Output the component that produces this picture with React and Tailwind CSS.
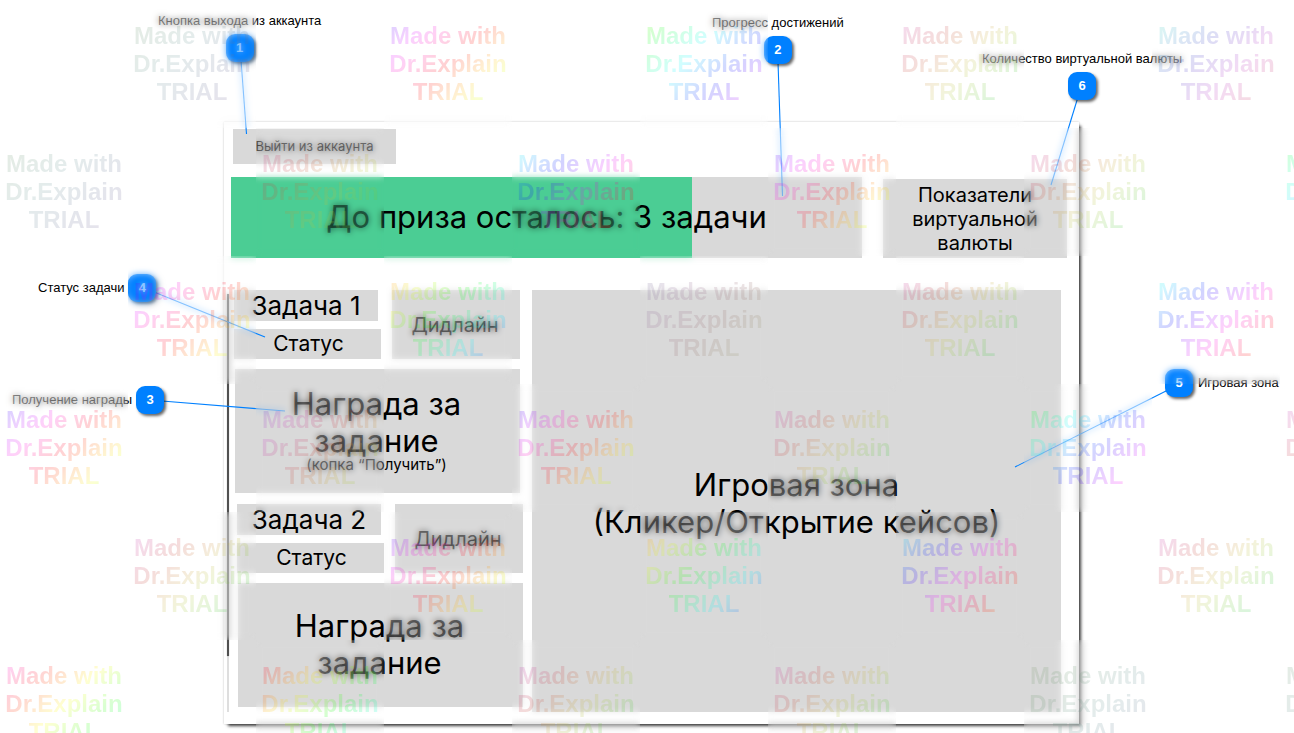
import React from "react";

const FULL = 100;
const SOFT = 55;
const FAINT = 18;

const WATERMARKS = [
  [1, 0, 100, 200, FAINT], [3, 0, 225, 270, FULL], [5, 0, 70, 270, FULL], [7, 0, 285, 250, SOFT], [9, 0, 140, 260, SOFT],
  [0, 1, 100, 200, FAINT], [2, 1, 300, 210, SOFT], [4, 1, 145, 290, FULL], [6, 1, 225, 265, FULL], [8, 1, 285, 250, SOFT], [10, 1, 100, 260, FULL],
  [1, 2, 230, 255, FULL], [3, 2, 0, 270, FULL], [5, 2, 225, 250, FAINT], [7, 2, 285, 260, SOFT], [9, 2, 140, 290, FULL],
  [0, 3, 215, 280, FULL], [2, 3, 235, 260, SOFT], [4, 3, 220, 280, FULL], [6, 3, 270, 280, SOFT], [8, 3, 90, 275, FULL], [10, 3, 275, 250, SOFT],
  [1, 4, 275, 265, SOFT], [3, 4, 225, 275, FULL], [5, 4, 0, 275, FULL], [7, 4, 155, 285, FULL], [9, 4, 275, 275, SOFT],
  [0, 5, 275, 290, FULL], [2, 5, 310, 290, FULL], [4, 5, 270, 275, SOFT], [6, 5, 275, 270, SOFT], [8, 5, 70, 190, FAINT], [10, 5, 105, 190, FAINT],
];

function spectrum(hue, span, saturation) {
  const stops = Array.from({ length: 13 }, (_, i) => `hsl(${hue + (span * i) / 12} ${saturation}% 50%)`);
  return `linear-gradient(135deg, ${stops.join(", ")})`;
}

function WatermarkLayer() {
  return (
    <div className="pointer-events-none absolute inset-0 grid auto-rows-[128px] grid-cols-[repeat(11,128px)] overflow-hidden">
      {WATERMARKS.map(([column, row, hue, span, saturation]) => (
        <div
          key={`${column}-${row}`}
          className="relative"
          style={{ gridColumn: column + 1, gridRow: row + 1 }}
        >
          <div className="absolute inset-0 opacity-60 backdrop-blur-[3px]" />
          <p
            className="relative h-full bg-clip-text pt-[22px] text-center font-['Liberation_Sans',Arial,sans-serif] text-2xl leading-7 font-bold text-transparent opacity-[0.18]"
            style={{ backgroundImage: spectrum(hue, span, saturation) }}
          >
            Made with
            <br />
            Dr.Explain
            <br />
            TRIAL
          </p>
        </div>
      ))}
    </div>
  );
}

function Badge({ children }) {
  return (
    <span className="flex size-7 shrink-0 items-center justify-center rounded-[9px] bg-[#0080ff] text-[13px] font-bold text-white shadow-[2px_2px_3px_rgba(0,0,0,0.6)]">
      {children}
    </span>
  );
}

function Callout({ number, label, className }) {
  return (
    <div
      className={`absolute flex items-center font-['Liberation_Sans',Arial,sans-serif] text-[13px] leading-4 whitespace-nowrap text-black ${className}`}
    >
      <span>{label}</span>
      <Badge>{number}</Badge>
    </div>
  );
}

function Leaders() {
  return (
    <svg className="pointer-events-none absolute inset-0 h-full w-full" stroke="#0080ff" strokeWidth="1.1" aria-hidden="true">
      <path d="M241 60 246.500 134" />
      <path d="M778 62 782.500 196" />
      <path d="M1078 97 1051 185" />
      <path d="M154 292 265 337" />
      <path d="M162 401 285 411" />
      <path d="M1168 390 1015 467" />
    </svg>
  );
}

function Task({ title, note, className }) {
  return (
    <article className={`w-[286px] ${className}`}>
      <div className="flex justify-between">
        <div className="flex flex-col gap-2">
          <h2 className="flex h-[31px] w-36 items-center justify-center bg-[#d9d9d9] text-[26px]">{title}</h2>
          <p className="flex h-[30px] w-[147px] items-center justify-center bg-[#d9d9d9] pl-[2px] text-[21px]">Статус</p>
        </div>
        <p className="flex w-32 items-center justify-center bg-[#d9d9d9] pr-[2px] text-xl">Дидлайн</p>
      </div>
      <button
        type="button"
        className={`mt-[10px] ml-px flex h-[124px] w-[285px] flex-col items-center justify-center bg-[#d9d9d9] pr-[2px] ${note ? "pb-1.5" : "pb-[3px]"}`}
      >
        <span className="text-[31px] leading-[37px]">
          Награда за
          <br />
          задание
        </span>
        {note && <span className="text-[15px] leading-3">{note}</span>}
      </button>
    </article>
  );
}

export default function App() {
  const progress = 73;
  return (
    <div className="relative overflow-hidden bg-white pt-[122px] pr-[215px] pb-[9px] pl-[224px] font-[Inter,sans-serif] text-black">
      <main className="relative bg-white pt-[7px] pb-3 shadow-[0_0_2px_rgba(0,0,0,0.25),3px_3px_3px_-1px_rgba(0,0,0,0.75)]">
        <div className="absolute top-[172px] bottom-3 left-[3px] w-0.5 bg-[#dedede]">
          <div className="h-[362px] bg-[#505050] shadow-[0_0_1px_rgba(0,0,0,0.5)]" />
        </div>
        <div className="pl-[9px]">
          <button type="button" className="block h-[35px] w-[163px] bg-[#d9d9d9] text-[13px]">
            Выйти из аккаунта
          </button>
        </div>
        <div className="mt-[13px] flex items-end gap-[21px] pr-3 pl-[7px]">
          <div
            role="progressbar"
            aria-label="До приза осталось: 3 задачи"
            aria-valuenow={progress}
            aria-valuemin={0}
            aria-valuemax={100}
            className="relative flex h-[81px] flex-1 items-center justify-center bg-[#d9d9d9]"
          >
            <div className="absolute inset-y-0 left-0 bg-[#4bcd94]" style={{ width: `${progress}%` }} />
            <span className="relative text-[31px]">До приза осталось: 3 задачи</span>
          </div>
          <p className="flex h-[79px] w-[184px] items-center justify-center bg-[#d9d9d9] text-center text-xl leading-6">
            Показатели
            <br />
            виртуальной
            <br />
            валюты
          </p>
        </div>
        <div className="mt-8 flex gap-[9px] pr-[18px] pl-[10px]">
          <section className="w-[289px] shrink-0 pb-[5px]">
            <Task title="Задача 1" note="(копка “Получить”)" />
            <Task title="Задача 2" className="mt-[11px] ml-[3px]" />
          </section>
          <section className="flex flex-1 items-center justify-center bg-[#d9d9d9] pt-1 text-center text-[31px] leading-[37px]">
            <p>
              Игровая зона
              <br />
              (Кликер/Открытие кейсов)
            </p>
          </section>
        </div>
      </main>

      <Leaders />
      <Callout number={1} label="Кнопка выхода из аккаунта" className="top-[13px] left-[158px] flex-col gap-[5px]" />
      <Callout number={2} label="Прогресс достижений" className="top-[15px] left-[712px] flex-col gap-[5px]" />
      <Callout number={6} label="Количество виртуальной валюты" className="top-[51px] left-[982px] flex-col gap-[5px]" />
      <Callout number={4} label="Статус задачи" className="top-[274px] left-[38px] gap-1" />
      <Callout number={3} label="Получение награды" className="top-[386px] left-3 gap-1" />
      <Callout number={5} label="Игровая зона" className="top-[369px] left-[1165px] flex-row-reverse gap-[5px]" />
      <WatermarkLayer />
    </div>
  );
}
